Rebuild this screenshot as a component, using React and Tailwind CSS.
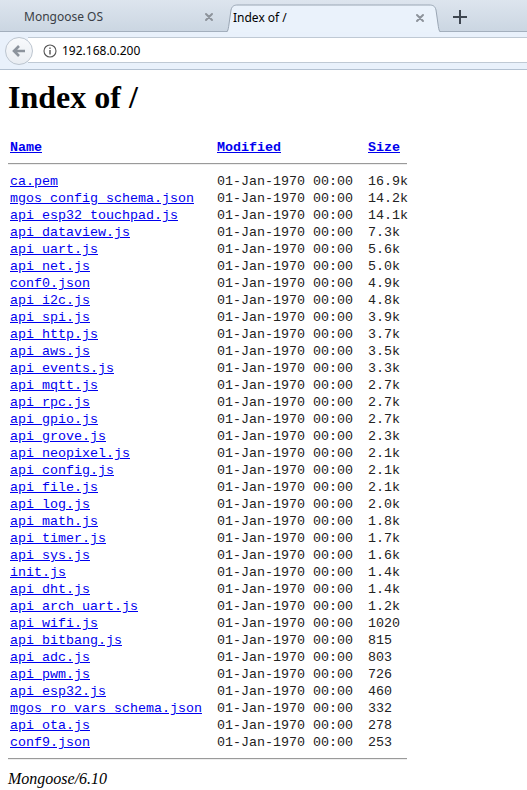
import React from "react";

const rows = [
  ["ca.pem", "16.9k"],
  ["mgos_config_schema.json", "14.2k"],
  ["api_esp32_touchpad.js", "14.1k"],
  ["api_dataview.js", "7.3k"],
  ["api_uart.js", "5.6k"],
  ["api_net.js", "5.0k"],
  ["conf0.json", "4.9k"],
  ["api_i2c.js", "4.8k"],
  ["api_spi.js", "3.9k"],
  ["api_http.js", "3.7k"],
  ["api_aws.js", "3.5k"],
  ["api_events.js", "3.3k"],
  ["api_mqtt.js", "2.7k"],
  ["api_rpc.js", "2.7k"],
  ["api_gpio.js", "2.7k"],
  ["api_grove.js", "2.3k"],
  ["api_neopixel.js", "2.1k"],
  ["api_config.js", "2.1k"],
  ["api_file.js", "2.1k"],
  ["api_log.js", "2.0k"],
  ["api_math.js", "1.8k"],
  ["api_timer.js", "1.7k"],
  ["api_sys.js", "1.6k"],
  ["init.js", "1.4k"],
  ["api_dht.js", "1.4k"],
  ["api_arch_uart.js", "1.2k"],
  ["api_wifi.js", "1020"],
  ["api_bitbang.js", "815"],
  ["api_adc.js", "803"],
  ["api_pwm.js", "726"],
  ["api_esp32.js", "460"],
  ["mgos_ro_vars_schema.json", "332"],
  ["api_ota.js", "278"],
  ["conf9.json", "253"],
];

function CloseX() {
  return (
    <svg width="10" height="10" viewBox="0 0 10 10">
      <path d="M2 2 L8 8 M8 2 L2 8" stroke="#8d939b" strokeWidth="2" strokeLinecap="round" />
    </svg>
  );
}

function Hr() {
  return <div className="h-[2px] w-[399px] border-t border-t-[#9a9a9a] border-b border-b-[#eeeeee]" />;
}

export default function App() {
  return (
    <div className="w-[527px] h-[790px] bg-white overflow-hidden">
      {/* tab strip */}
      <div className="relative h-[32px] flex items-end bg-gradient-to-b from-[#dde5ee] to-[#cbd6e2] border-b border-b-[#a3afbd]">
        <div className="w-[222px] h-[28px] flex items-center pl-[24px] pr-[8px] justify-between text-[12px] text-[#3a3f46] font-['Noto_Sans',sans-serif]">
          <span>Mongoose OS</span>
          <CloseX />
        </div>
        <div className="relative w-[223px] h-[28px] -mb-[1px]">
          <svg className="absolute inset-0" width="223" height="29" viewBox="0 0 223 29">
            <path
              d="M0 29 C6 29 6 27 7 20 L9 6 C10 2 12 1 16 1 L207 1 C211 1 213 2 214 6 L216 20 C217 27 217 29 223 29 Z"
              fill="#eaf2fb"
              stroke="#9aa6b4"
              strokeWidth="1"
            />
            <rect x="1" y="28" width="221" height="2" fill="#eaf2fb" />
          </svg>
          <div className="relative h-full flex items-center justify-between pl-[11px] pr-[20px] text-[12px] text-black font-['Noto_Sans',sans-serif]">
            <span>Index of /</span>
            <CloseX />
          </div>
        </div>
        <div className="h-[28px] w-[30px] flex items-center justify-center">
          <svg width="16" height="16" viewBox="0 0 16 16">
            <path d="M8 1 L8 15 M1 8 L15 8" stroke="#3e4650" strokeWidth="2" />
          </svg>
        </div>
      </div>

      {/* toolbar */}
      <div className="relative h-[38px] bg-[#e9f1fb] border-b border-b-[#b3c1d1] flex items-center">
        <div className="absolute left-0 right-0 top-[5px] h-[26px] bg-white border-y border-y-[#bfc9d4] ml-[28px]" />
        <div className="relative z-10 ml-[5px] w-[28px] h-[28px] rounded-full border border-[#bcc5cf] bg-gradient-to-b from-[#f8fafc] to-[#e9edf2] flex items-center justify-center">
          <svg width="16" height="16" viewBox="0 0 16 16">
            <path d="M14 8 L3 8 M8 3 L3 8 L8 13" stroke="#8c939c" strokeWidth="2.6" fill="none" strokeLinejoin="miter" />
          </svg>
        </div>
        <div className="relative z-10 ml-[10px] flex items-center gap-[5px]">
          <svg width="14" height="14" viewBox="0 0 14 14">
            <circle cx="7" cy="7" r="6" fill="none" stroke="#555" strokeWidth="1.1" />
            <rect x="6.3" y="6" width="1.4" height="4.5" fill="#555" />
            <rect x="6.3" y="3.5" width="1.4" height="1.4" fill="#555" />
          </svg>
          <span className="text-[12px] text-black font-['Noto_Sans',sans-serif]">192.168.0.200</span>
        </div>
      </div>

      {/* page */}
      <div className="px-[8px]">
        <h1 className="mt-[9px] text-[32px] leading-[37px] font-bold text-black font-['Liberation_Serif',serif]">
          Index of /
        </h1>
        <div className="mt-[23px] font-['Liberation_Mono',monospace] text-[13.33px] leading-[17px]">
          <div className="grid grid-cols-[207px_151px_auto] pl-[2px] font-bold">
            <a href="#" className="text-[#0000ee] underline">Name</a>
            <a href="#" className="text-[#0000ee] underline">Modified</a>
            <a href="#" className="text-[#0000ee] underline justify-self-start">Size</a>
          </div>
          <div className="mt-[7px] mb-[8px]">
            <Hr />
          </div>
          {rows.map(([name, size]) => (
            <div key={name} className="grid grid-cols-[207px_151px_auto] pl-[2px] h-[17px]">
              <div>
                <a href="#" className="text-[#0000ee] underline">{name}</a>
              </div>
              <div className="text-[#222]">01-Jan-1970 00:00</div>
              <div className="text-[#222]">{size}</div>
            </div>
          ))}
          <div className="mt-[7px]">
            <Hr />
          </div>
        </div>
        <div className="mt-[9px] italic text-[16px] leading-[19px] text-black font-['Liberation_Serif',serif]">
          Mongoose/6.10
        </div>
      </div>
    </div>
  );
}
